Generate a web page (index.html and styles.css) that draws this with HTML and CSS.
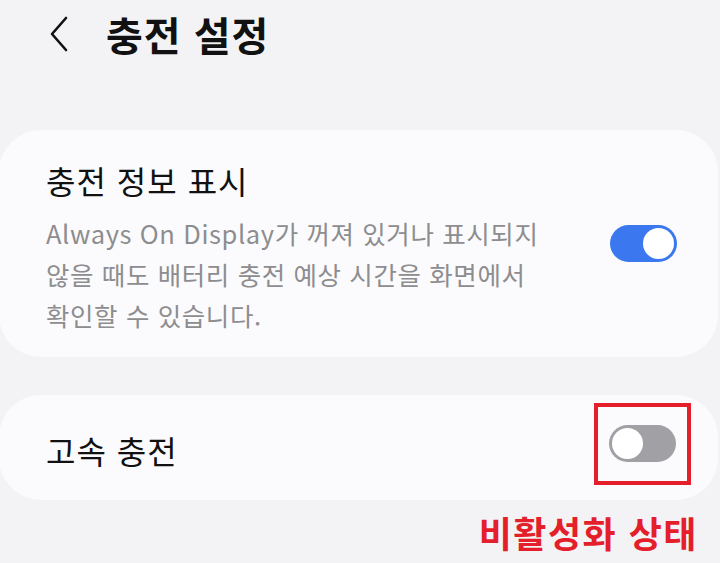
FILE: index.html
```html
<!DOCTYPE html>
<html lang="ko">
<head>
<meta charset="utf-8">
<link rel="stylesheet" href="styles.css">
</head>
<body>
<div class="screen">
  <header class="header">
    <svg class="back" width="22" height="36" viewBox="0 0 22 36"><path d="M18 2 L4 18 L18 34" fill="none" stroke="#111" stroke-width="2.6" stroke-linecap="round" stroke-linejoin="round"/></svg>
    <h1 class="title">충전 설정</h1>
  </header>
  <section class="card card-info">
    <div class="text">
      <div class="item-title">충전 정보 표시</div>
      <div class="item-desc">Always On Display가 꺼져 있거나 표시되지<br>않을 때도 배터리 충전 예상 시간을 화면에서<br>확인할 수 있습니다.</div>
    </div>
    <div class="toggle on"><span class="knob"></span></div>
  </section>
  <section class="card card-fast">
    <div class="item-title">고속 충전</div>
    <div class="highlight">
      <div class="toggle off"><span class="knob"></span></div>
    </div>
  </section>
  <div class="note">비활성화 상태</div>
</div>
</body>
</html>
```

FILE: styles.css
```css
* { box-sizing: border-box; }
html, body {
  margin: 0;
  padding: 0;
  background: #f3f3f5;
}
body {
  width: 720px;
  height: 563px;
  overflow: hidden;
  font-family: "Noto Sans CJK KR", "Noto Sans", sans-serif;
}
.screen {
  display: flex;
  flex-direction: column;
}
.header {
  display: flex;
  align-items: center;
  height: 70px;
  padding-left: 48px;
  margin-bottom: 60px;
}
.back {
  display: block;
  margin-right: 36px;
  margin-top: -2px;
}
.title {
  margin: 0;
  font-size: 40px;
  font-weight: 700;
  color: #111;
  letter-spacing: 1px;
  line-height: 1;
  margin-top: -3px;
}
.card {
  background: #fbfbfd;
  border-radius: 42px;
  margin: 0 2px 0 -1px;
  display: flex;
  align-items: center;
  justify-content: space-between;
}
.card-info {
  padding: 30px 41px 22px 47px;
  height: 227px;
}
.card-fast {
  margin-top: 38px;
  height: 105px;
  padding: 4px 27px 0 47px;
}
.item-title {
  font-size: 32px;
  line-height: 40px;
  color: #111;
  letter-spacing: 1px;
}
.item-desc {
  margin-top: 12px;
  font-size: 25.5px;
  line-height: 41px;
  color: #8d8d8f;
  letter-spacing: 0.6px;
}
.text {
  display: flex;
  flex-direction: column;
}
.toggle {
  width: 67px;
  height: 37px;
  border-radius: 19px;
  display: flex;
  align-items: center;
  padding: 0 3px;
}
.toggle .knob {
  width: 31px;
  height: 31px;
  border-radius: 50%;
  background: #fff;
}
.toggle.on {
  background: #3b78ef;
  justify-content: flex-end;
  margin-top: -9px;
}
.toggle.off {
  background: #a1a1a5;
  justify-content: flex-start;
}
.highlight {
  border: 4px solid #e41e2b;
  width: 97px;
  height: 82px;
  display: flex;
  align-items: center;
  justify-content: center;
  margin-top: -12px;
}
.note {
  align-self: flex-end;
  margin-right: 22px;
  margin-top: 6px;
  font-size: 36px;
  font-weight: 700;
  color: #e41e2b;
  line-height: 52px;
  letter-spacing: 1.5px;
}
```
